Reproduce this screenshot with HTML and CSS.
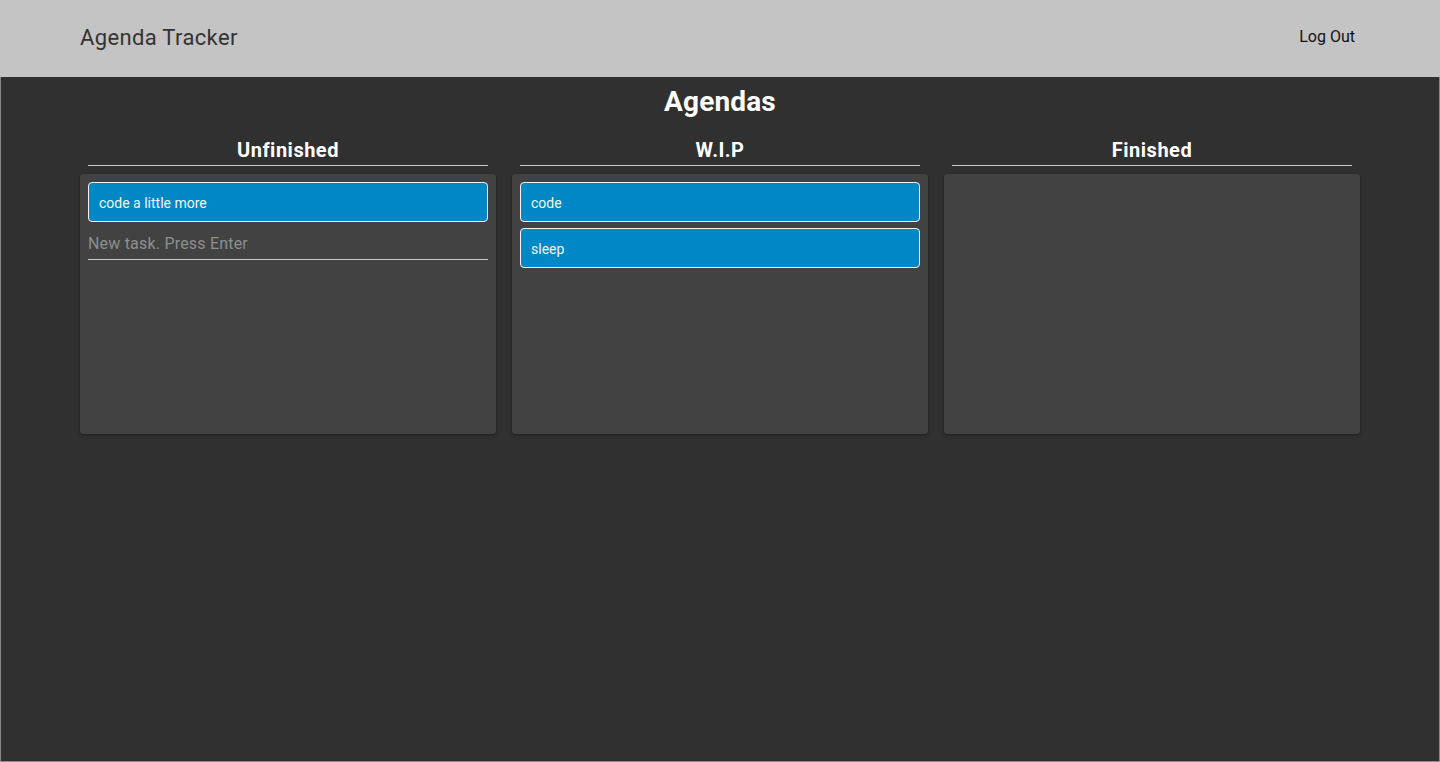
FILE: index.html
```html
<!DOCTYPE html>
<html lang="en">
<head>
<meta charset="utf-8">
<title>Agenda Tracker</title>
<link rel="stylesheet" href="styles.css">
</head>
<body>
<div class="app">
  <header class="topbar">
    <div class="brand">Agenda Tracker</div>
    <button class="logout">Log Out</button>
  </header>
  <main class="main">
    <h1 class="title">Agendas</h1>
    <div class="board">
      <section class="column">
        <h2 class="col-title">Unfinished</h2>
        <div class="card">
          <div class="task">code a little more</div>
          <input class="new-task" type="text" placeholder="New task. Press Enter">
        </div>
      </section>
      <section class="column">
        <h2 class="col-title">W.I.P</h2>
        <div class="card">
          <div class="task">code</div>
          <div class="task">sleep</div>
        </div>
      </section>
      <section class="column">
        <h2 class="col-title">Finished</h2>
        <div class="card"></div>
      </section>
    </div>
  </main>
</div>
</body>
</html>
```

FILE: styles.css
```css
* { box-sizing: border-box; }
html, body { margin: 0; height: 100%; }
body {
  font-family: Roboto, "Noto Sans", Arial, sans-serif;
  background: #303030;
}
.app {
  height: 762px;
  display: flex;
  flex-direction: column;
  border: 1px solid #8a8a8a;
  border-top: none;
  background: #303030;
}
.topbar {
  height: 77px;
  flex: 0 0 77px;
  background: #c4c4c4;
  display: flex;
  align-items: center;
  justify-content: space-between;
  padding: 0 85px 2px 80px;
  margin: 0 -1px;
}
.brand {
  font-size: 22px;
  color: #333;
  letter-spacing: 0.35px;
}
.logout {
  background: none;
  border: none;
  font-family: inherit;
  font-size: 16px;
  color: #111;
  padding: 0;
  margin-top: -2px;
}
.main {
  flex: 1;
  width: 1280px;
  margin: 0 auto;
}
.title {
  margin: 9px 0 0;
  line-height: 32px;
  font-size: 28px;
  font-weight: 700;
  color: #fff;
  text-align: center;
  letter-spacing: 0.15px;
}
.board {
  display: grid;
  grid-template-columns: repeat(3, 1fr);
  gap: 16px;
  margin-top: 20px;
}
.col-title {
  margin: 0 8px 8px;
  font-size: 20px;
  line-height: 24px;
  font-weight: 700;
  color: #fff;
  text-align: center;
  padding-bottom: 3px;
  border-bottom: 1px solid #c8c8c8;
  letter-spacing: 0.5px;
}
.card {
  height: 260px;
  background: #424242;
  border-radius: 4px;
  box-shadow: 0 1px 3px rgba(0,0,0,0.45);
  padding: 8px;
  display: flex;
  flex-direction: column;
  gap: 6px;
}
.task {
  height: 40px;
  flex: 0 0 40px;
  background: #0088c6;
  border: 1px solid #f2f2f2;
  border-radius: 4px;
  color: #f4f4f4;
  font-size: 14px;
  display: flex;
  align-items: center;
  padding: 2px 0 0 10px;
  letter-spacing: 0;
}
.new-task {
  height: 32px;
  background: transparent;
  border: none;
  border-bottom: 1px solid #c8c8c8;
  font-family: inherit;
  font-size: 16px;
  color: #fff;
  padding: 0;
  outline: none;
  letter-spacing: 0.2px;
}
.new-task::placeholder { color: #8e8e8e; }
```
